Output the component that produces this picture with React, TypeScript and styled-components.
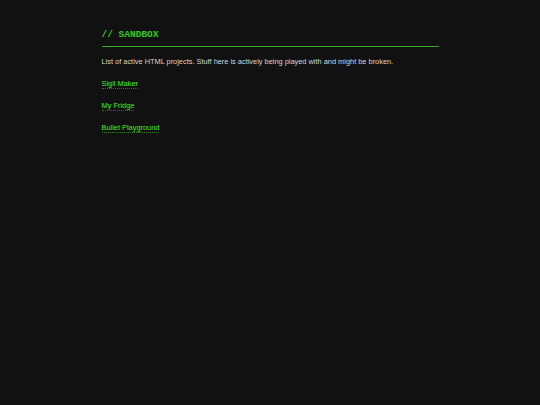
import * as React from 'react'
import styled, { createGlobalStyle } from 'styled-components'

const GlobalStyle = createGlobalStyle`
  html, body {
    margin: 0;
    padding: 0;
    background: #111111;
  }
  body {
    font-family: "Liberation Sans", Arial, sans-serif;
  }
`

const Page = styled.div`
  min-height: 405px;
  background: #111111;
  display: flex;
  justify-content: center;
`

const Column = styled.main`
  width: 337px;
  padding-top: 29px;
  display: flex;
  flex-direction: column;
`

const Heading = styled.h1`
  margin: 0;
  padding-bottom: 5px;
  border-bottom: 1.5px solid #33aa22;
  font-family: "Liberation Mono", "Courier New", monospace;
  font-weight: bold;
  font-size: 9.5px;
  line-height: 12px;
  color: #33cc22;
`

const Intro = styled.p`
  margin: 10px 0 0;
  font-size: 7.4px;
  line-height: 10px;
  color: #d8d8d8;
`

const LinkList = styled.ul`
  list-style: none;
  margin: 12px 0 0;
  padding: 0;
  display: flex;
  flex-direction: column;
  gap: 12px;
`

const Item = styled.li`
  font-size: 7.4px;
  line-height: 10px;
`

const ProjectLink = styled.a`
  color: #44ee22;
  text-decoration: none;
  border-bottom: 1px dotted #2a7a18;
`

const projects = ['Sigil Maker', 'My Fridge', 'Bullet Playground']

const App = () => {
  return (
    <>
      <GlobalStyle />
      <Page>
        <Column>
          <Heading>// SANDBOX</Heading>
          <Intro>
            List of active HTML projects. Stuff here is actively being played
            with and might be broken.
          </Intro>
          <LinkList>
            {projects.map((name) => (
              <Item key={name}>
                <ProjectLink href="#">{name}</ProjectLink>
              </Item>
            ))}
          </LinkList>
        </Column>
      </Page>
    </>
  )
}

export default App
